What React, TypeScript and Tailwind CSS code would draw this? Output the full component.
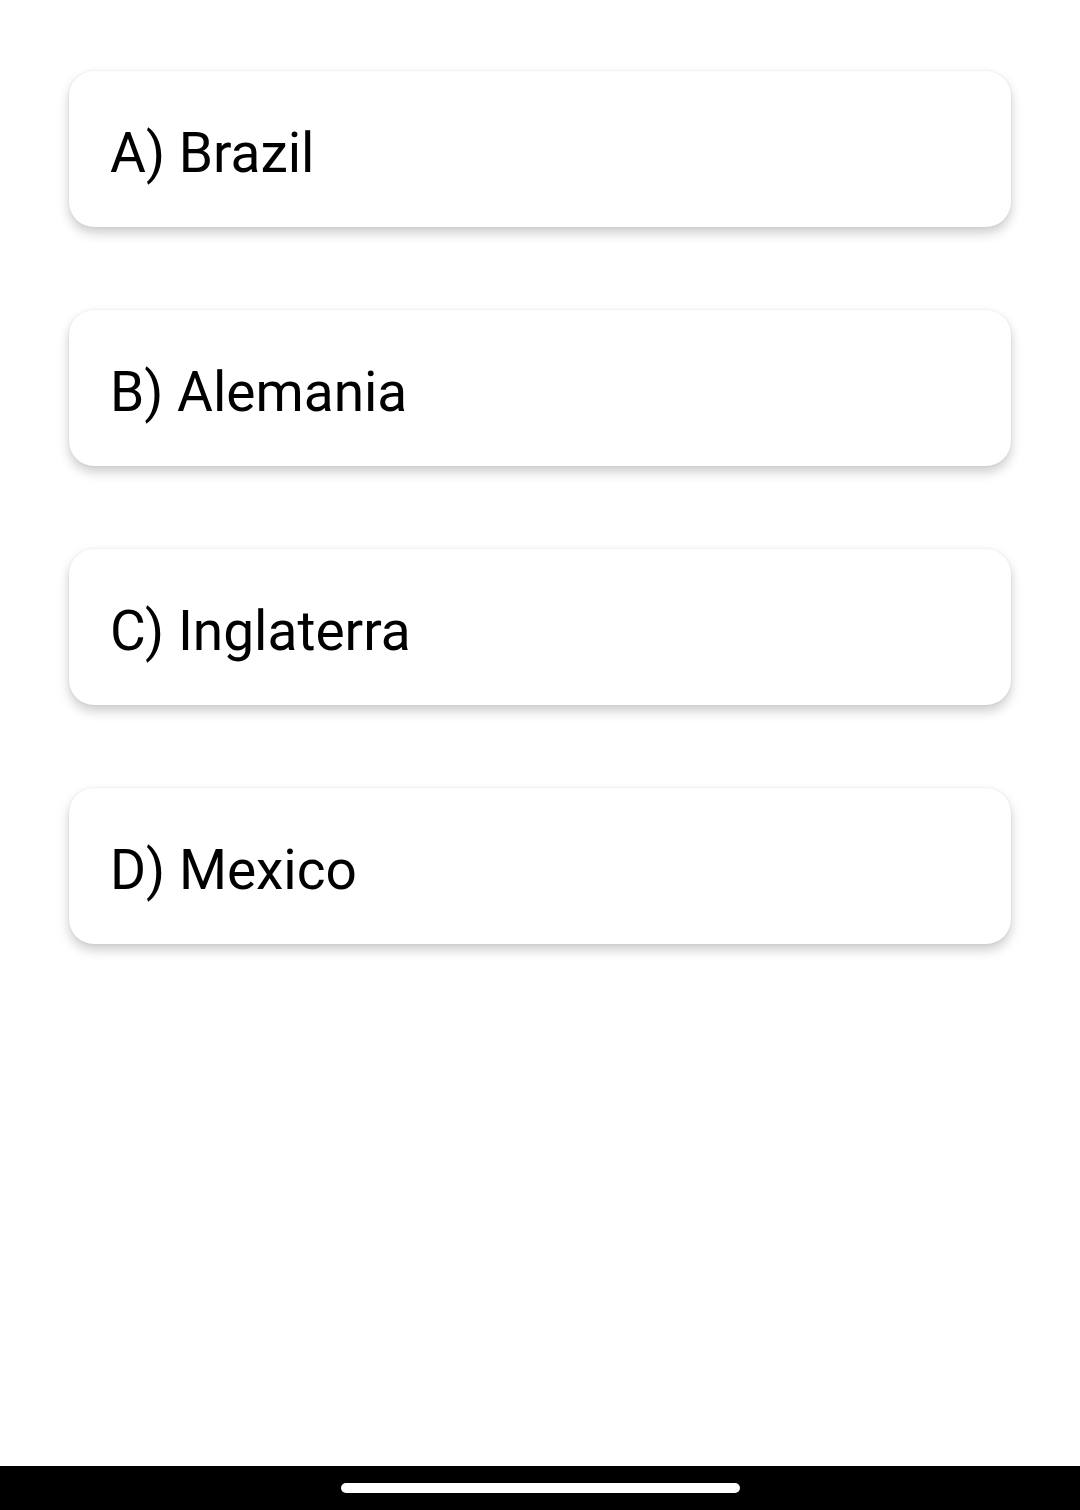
const options = ['A) Brazil', 'B) Alemania', 'C) Inglaterra', 'D) Mexico']

function OptionCard({ label }: { label: string }) {
  return (
    <div className="h-[156px] rounded-[25px] bg-white pl-[41px] pt-[49px] shadow-[0_6px_12px_rgba(0,0,0,0.2),0_0_3px_rgba(0,0,0,0.07)]">
      <span className="block text-[55px] leading-[66px] text-black">{label}</span>
    </div>
  )
}

export default function App() {
  return (
    <div
      className="flex h-[1510px] w-[1080px] flex-col bg-white"
      style={{ fontFamily: 'Roboto, "Liberation Sans", sans-serif' }}>
      <div className="flex flex-1 flex-col gap-[83px] pl-[69px] pr-[69px] pt-[71px]">
        {options.map((o) => (
          <OptionCard key={o} label={o} />
        ))}
      </div>
      <div className="flex h-[44px] items-start justify-center bg-black pt-[17px]">
        <div className="h-[10px] w-[399px] rounded-full bg-white" />
      </div>
    </div>
  )
}
